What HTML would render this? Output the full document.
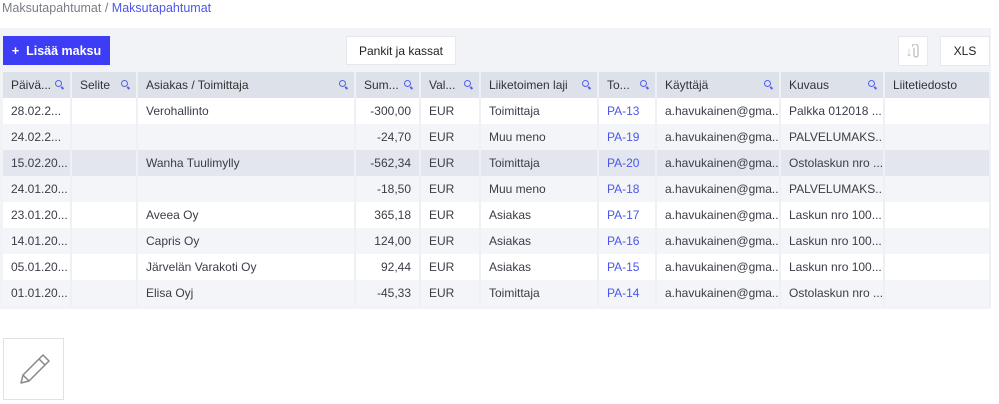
<!DOCTYPE html><html><head><style>
*{box-sizing:border-box;margin:0;padding:0}
body{width:999px;height:403px;background:#fff;font-family:"Liberation Sans",sans-serif;font-size:12px;color:#3a3d45;position:relative;overflow:hidden}
.bc{position:absolute;left:2px;top:1px;font-size:12.5px;color:#7a7d85}
.bc b{font-weight:normal;color:#4b57e8}
.band{position:absolute;left:0;top:28px;width:991px;height:281px;background:#f1f3f7}
.btn{position:absolute;background:#fff;border:1px solid #e6e8ee;font-size:12px;display:flex;align-items:center;justify-content:center;color:#222}
.add{position:absolute;left:3px;top:36px;width:107px;height:29px;background:#3d3df5;color:#fff;font-size:12.5px;font-weight:bold;display:flex;align-items:center;justify-content:center}
table{position:absolute;left:3px;top:72px;width:987px;border-collapse:collapse;table-layout:fixed}
th{background:#dde1ea;height:26px;text-align:left;font-weight:normal;padding-left:8px;border-right:2px solid #eef0f4;position:relative;color:#333}
th i{position:absolute;right:8px;top:8px;width:7px;height:7px;border:1.5px solid #5560e6;border-radius:50%}
th i:after{content:"";position:absolute;width:3px;height:1.5px;background:#5560e6;right:-3px;bottom:-2px;transform:rotate(45deg)}
td{height:26px;padding-left:8px;border-right:2px solid #eef0f4;white-space:nowrap;overflow:hidden;color:#3a3d45}
tr.a td{background:#fff}tr.b td{background:#f4f5f9}tr.h td{background:#e3e6ee}
td.r{text-align:right;padding-right:8px}
td.l{color:#4b57e8}
.pen{position:absolute;left:3px;top:338px;width:61px;height:62px;border:1px solid #e2e2e2}
</style></head><body>
<div class="bc">Maksutapahtumat / <b>Maksutapahtumat</b></div>
<div class="band"></div>
<div class="add">+&nbsp; Lisää maksu</div>
<div class="btn" style="left:346px;top:36px;width:110px;height:29px">Pankit ja kassat</div>
<div class="btn" style="left:898px;top:36px;width:30px;height:30px;color:#bbb;font-size:13px">↓<svg width="8" height="14" viewBox="0 0 8 14"><path d="M2 4v7a2 2 0 004 0V3a3 3 0 00-6 0" fill="none" stroke="#bbb" stroke-width="1.2"/></svg></div>
<div class="btn" style="left:940px;top:36px;width:50px;height:30px">XLS</div>
<table>
<colgroup><col style="width:68px"><col style="width:66px"><col style="width:218px"><col style="width:65px"><col style="width:60px"><col style="width:118px"><col style="width:58px"><col style="width:124px"><col style="width:104px"><col style="width:106px"></colgroup>
<tr><th>Päivä...<i></i></th><th>Selite<i></i></th><th>Asiakas / Toimittaja<i></i></th><th>Sum...<i></i></th><th>Val...<i></i></th><th>Liiketoimen laji<i></i></th><th>To...<i></i></th><th>Käyttäjä<i></i></th><th>Kuvaus<i></i></th><th>Liitetiedosto</th></tr>
<tr class="a"><td>28.02.2...</td><td></td><td>Verohallinto</td><td class="r">-300,00</td><td>EUR</td><td>Toimittaja</td><td class="l">PA-13</td><td>a.havukainen@gma...</td><td>Palkka 012018 ...</td><td></td></tr>
<tr class="b"><td>24.02.2...</td><td></td><td></td><td class="r">-24,70</td><td>EUR</td><td>Muu meno</td><td class="l">PA-19</td><td>a.havukainen@gma...</td><td>PALVELUMAKS...</td><td></td></tr>
<tr class="h"><td>15.02.20...</td><td></td><td>Wanha Tuulimylly</td><td class="r">-562,34</td><td>EUR</td><td>Toimittaja</td><td class="l">PA-20</td><td>a.havukainen@gma...</td><td>Ostolaskun nro ...</td><td></td></tr>
<tr class="b"><td>24.01.20...</td><td></td><td></td><td class="r">-18,50</td><td>EUR</td><td>Muu meno</td><td class="l">PA-18</td><td>a.havukainen@gma...</td><td>PALVELUMAKS...</td><td></td></tr>
<tr class="a"><td>23.01.20...</td><td></td><td>Aveea Oy</td><td class="r">365,18</td><td>EUR</td><td>Asiakas</td><td class="l">PA-17</td><td>a.havukainen@gma...</td><td>Laskun nro 100...</td><td></td></tr>
<tr class="b"><td>14.01.20...</td><td></td><td>Capris Oy</td><td class="r">124,00</td><td>EUR</td><td>Asiakas</td><td class="l">PA-16</td><td>a.havukainen@gma...</td><td>Laskun nro 100...</td><td></td></tr>
<tr class="a"><td>05.01.20...</td><td></td><td>Järvelän Varakoti Oy</td><td class="r">92,44</td><td>EUR</td><td>Asiakas</td><td class="l">PA-15</td><td>a.havukainen@gma...</td><td>Laskun nro 100...</td><td></td></tr>
<tr class="b"><td>01.01.20...</td><td></td><td>Elisa Oyj</td><td class="r">-45,33</td><td>EUR</td><td>Toimittaja</td><td class="l">PA-14</td><td>a.havukainen@gma...</td><td>Ostolaskun nro ...</td><td></td></tr>
</table>
<div class="pen"><svg width="61" height="62" viewBox="0 0 61 62"><path d="M17 44l2-8 20-20 6 6-20 20z M19 36l6 6 M35 20l6 6 M17 44l8-2" fill="none" stroke="#888" stroke-width="1.5" stroke-linejoin="round"/></svg></div>
</body></html>
